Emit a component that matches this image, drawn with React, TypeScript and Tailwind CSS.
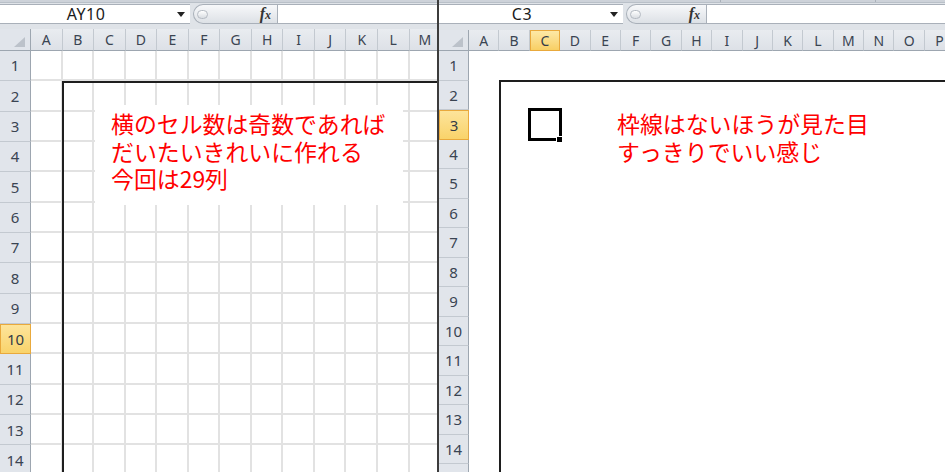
import React from "react";

const LEFT_COLS = ["A", "B", "C", "D", "E", "F", "G", "H", "I", "J", "K", "L", "M"];
const RIGHT_COLS = ["A", "B", "C", "D", "E", "F", "G", "H", "I", "J", "K", "L", "M", "N", "O", "P"];
const ROWS = Array.from({ length: 15 }, (_, i) => i + 1);

const uiFont = { fontFamily: '"Noto Sans", "Liberation Sans", sans-serif' };
const jpFont = { fontFamily: '"Noto Sans CJK JP", "Noto Sans", sans-serif' };

function DropArrow() {
  return (
    <svg width="8" height="5" viewBox="0 0 8 5">
      <polygon points="0,0 8,0 4,5" fill="#222" />
    </svg>
  );
}

function CornerCell() {
  return (
    <div className="relative bg-[#e1e5eb] border-r border-b border-r-[#9da6b0] border-b-[#9da6b0]">
      <svg className="absolute right-[5px] bottom-[3px]" width="11" height="10" viewBox="0 0 11 10">
        <polygon points="11,0 11,10 0,10" fill="#bcc2ca" />
      </svg>
    </div>
  );
}

interface FormulaBarProps {
  name: string;
  nameBoxClass: string;
  pillClass: string;
  barClass: string;
  children?: React.ReactNode;
}

function FormulaBar({ name, nameBoxClass, pillClass, barClass, children }: FormulaBarProps) {
  return (
    <div className={`relative flex flex-col bg-[#dfe3e8] ${barClass}`}>
      <div className="relative h-[3px] bg-[#cdd2d9] border-b border-[#b9c0c8]">{children}</div>
      <div className="flex h-[20px] mt-[1px]" style={uiFont}>
        <div className={`flex items-center bg-white border-y border-[#a9b0b9] ${nameBoxClass}`}>
          <span className="flex-1 text-center text-[16px] tracking-[0.5px] leading-none text-[#1a1a1a]">
            {name}
          </span>
          <span className="w-[18px] flex justify-center">
            <DropArrow />
          </span>
        </div>
        <div
          className={`ml-[3px] flex items-center justify-end pr-[6px] rounded-l-full border border-r-0 border-[#a9b0b9] bg-gradient-to-b from-[#f7f8fa] to-[#dde1e6] ${pillClass}`}
        >
          <span className="mr-auto ml-[3px] w-[11px] h-[9px] rounded-full border border-[#b4bac2] bg-gradient-to-b from-white to-[#d9dde2]" />
          <span
            className="italic font-bold text-[16px] leading-none text-[#333]"
            style={{ fontFamily: '"Liberation Serif", serif' }}
          >
            f<span className="text-[12px]">x</span>
          </span>
        </div>
        <div className="flex-1 bg-white border border-r-0 border-[#a9b0b9]" />
      </div>
    </div>
  );
}

function ColHeader({ label, active }: { label: string; active?: boolean }) {
  return (
    <div
      className={
        active
          ? "flex items-center justify-center bg-gradient-to-b from-[#fde9a6] to-[#f8cf63] border border-[#e9a93c] text-[14px] text-[#333c48]"
          : "flex items-center justify-center bg-gradient-to-b from-[#e9ecf0] to-[#dde1e7] border-r border-b border-r-[#c3c9d0] border-b-[#9da6b0] text-[14px] text-[#3a4452]"
      }
      style={uiFont}
    >
      {label}
    </div>
  );
}

function RowHeader({ n, active }: { n: number; active?: boolean }) {
  return (
    <div
      className={
        active
          ? "flex items-center justify-center bg-gradient-to-b from-[#fde49a] to-[#f9d36a] border border-[#e9a93c] text-[15px] text-[#333c48]"
          : "flex items-center justify-center bg-[#e1e5eb] border-r border-b border-r-[#9da6b0] border-b-[#c3c9d0] text-[15px] text-[#3a4452]"
      }
      style={uiFont}
    >
      {n}
    </div>
  );
}

function LeftSheet() {
  return (
    <div className="w-[437px] h-full flex flex-col overflow-hidden">
      <FormulaBar name="AY10" barClass="h-[29px]" nameBoxClass="w-[190px]" pillClass="w-[84px]" />
      <div className="relative flex-1 overflow-hidden bg-white">
        <div className="grid grid-cols-[31px_repeat(13,31.55px)] grid-rows-[22px_repeat(15,30.35px)] w-max">
          <CornerCell />
          {LEFT_COLS.map((c) => (
            <ColHeader key={c} label={c} />
          ))}
          {ROWS.map((r) => (
            <React.Fragment key={r}>
              <RowHeader n={r} active={r === 10} />
              {LEFT_COLS.map((c) => (
                <div key={c} className="border-r-2 border-b-2 border-[#e2e2e2]" />
              ))}
            </React.Fragment>
          ))}
        </div>

        {/* outer border from B2 */}
        <div className="absolute left-[62px] top-[52px] right-0 bottom-0 border-l-2 border-t-2 border-[#1e1e1e]" />

        {/* text box */}
        <div
          className="absolute left-[95px] top-[76px] w-[308px] h-[100px] bg-white pl-[16px] pt-[5px] text-[22.9px] leading-[27.5px] text-[#ff0000] whitespace-nowrap"
          style={jpFont}
        >
          <div>横のセル数は奇数であれば</div>
          <div>だいたいきれいに作れる</div>
          <div>今回は29列</div>
        </div>
      </div>
    </div>
  );
}

function RightSheet() {
  return (
    <div className="flex-1 h-full flex flex-col overflow-hidden">
      <FormulaBar name="C3" barClass="h-[30px]" nameBoxClass="w-[184px]" pillClass="w-[80px]">
        <span className="absolute left-[281px] top-0 h-full border-l border-[#a9b0b9]" />
        <span className="absolute left-[436px] top-0 h-full border-l border-[#a9b0b9]" />
      </FormulaBar>
      <div className="relative flex-1 overflow-hidden bg-white">
        <div className="grid grid-cols-[30px_repeat(16,30.4px)] grid-rows-[21px_repeat(15,29.5px)] w-max">
          <CornerCell />
          {RIGHT_COLS.map((c) => (
            <ColHeader key={c} label={c} active={c === "C"} />
          ))}
          {ROWS.map((r) => (
            <React.Fragment key={r}>
              <RowHeader n={r} active={r === 3} />
              {RIGHT_COLS.map((c) => (
                <div key={c} />
              ))}
            </React.Fragment>
          ))}
        </div>

        <div className="absolute left-[60px] top-[50px] right-0 bottom-0 border-l-2 border-t-2 border-[#1e1e1e]" />

        {/* selected cell C3 */}
        <div className="absolute left-[89px] top-[78px] w-[34px] h-[33px] border-[3px] border-black" />
        <div className="absolute left-[117px] top-[106px] w-[7px] h-[7px] bg-black border border-white" />

        <div
          className="absolute left-[178px] top-[80px] text-[22.9px] leading-[27.5px] text-[#ff0000] whitespace-nowrap"
          style={jpFont}
        >
          <div>枠線はないほうが見た目</div>
          <div>すっきりでいい感じ</div>
        </div>
      </div>
    </div>
  );
}

export default function App() {
  return (
    <div className="w-[945px] h-[472px] flex overflow-hidden bg-white">
      <LeftSheet />
      <div className="w-[2px] h-full bg-[#3c3c3c]" />
      <RightSheet />
    </div>
  );
}
